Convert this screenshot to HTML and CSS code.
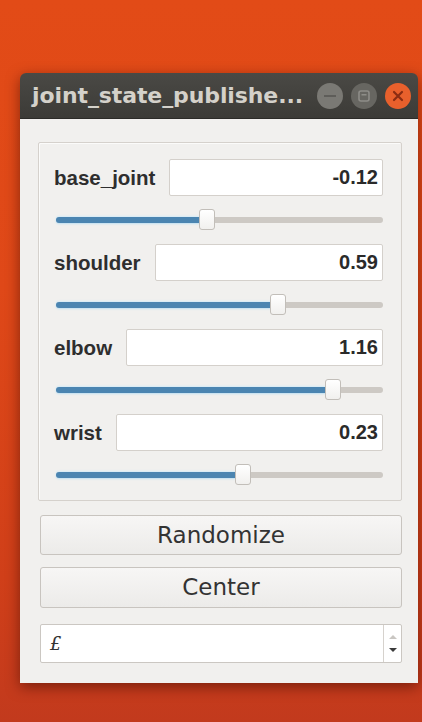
FILE: index.html
```html
<!DOCTYPE html>
<html>
<head>
<meta charset="utf-8">
<link rel="stylesheet" href="styles.css">
</head>
<body>
<div class="window">
  <div class="titlebar">
    <span class="title">joint_state_publishe...</span>
    <div class="controls">
      <span class="wbtn min"><svg width="28" height="28" viewBox="0 0 28 28"><circle cx="14" cy="14" r="13" fill="#7a7974"/><rect x="8" y="13" width="12" height="2" fill="#5e5d59"/></svg></span>
      <span class="wbtn max"><svg width="28" height="28" viewBox="0 0 28 28"><circle cx="14" cy="14" r="13" fill="#676661"/><rect x="9" y="9" width="10" height="10" rx="2" fill="none" stroke="#8e8d88" stroke-width="1.6"/><rect x="11.5" y="12" width="5" height="1.5" fill="#8e8d88"/></svg></span>
      <span class="wbtn close"><svg width="28" height="28" viewBox="0 0 28 28"><circle cx="14" cy="14" r="13" fill="#e8602c"/><path d="M10 10 L18 18 M18 10 L10 18" stroke="#8a2c12" stroke-width="2.2" stroke-linecap="round"/></svg></span>
    </div>
  </div>
  <div class="content">
    <div class="group">
      <div class="joint">
        <div class="row"><span class="label">base_joint</span><div class="value">-0.12</div></div>
        <div class="slider"><div class="track"><div class="fill" style="width:46.3%"></div><div class="handle" style="left:46.3%"></div></div></div>
      </div>
      <div class="joint">
        <div class="row"><span class="label">shoulder</span><div class="value">0.59</div></div>
        <div class="slider"><div class="track"><div class="fill" style="width:67.8%"></div><div class="handle" style="left:67.8%"></div></div></div>
      </div>
      <div class="joint">
        <div class="row"><span class="label">elbow</span><div class="value">1.16</div></div>
        <div class="slider"><div class="track"><div class="fill" style="width:84.7%"></div><div class="handle" style="left:84.7%"></div></div></div>
      </div>
      <div class="joint">
        <div class="row"><span class="label">wrist</span><div class="value">0.23</div></div>
        <div class="slider"><div class="track"><div class="fill" style="width:57.1%"></div><div class="handle" style="left:57.1%"></div></div></div>
      </div>
    </div>
    <div class="button b1">Randomize</div>
    <div class="button b2">Center</div>
    <div class="spin">
      <span class="spintext">£</span>
      <div class="arrows">
        <svg width="10" height="30" viewBox="0 0 10 30"><path d="M1 10 L9 10 L5 6 Z" fill="#c9c6c2"/><path d="M1 19 L9 19 L5 23 Z" fill="#3a3a3a"/></svg>
      </div>
    </div>
  </div>
</div>
</body>
</html>
```

FILE: styles.css
```css
html, body {
  margin: 0;
  padding: 0;
}
body {
  width: 422px;
  height: 722px;
  overflow: hidden;
  background: linear-gradient(180deg, #e24b17 0%, #df4818 40%, #d03f19 80%, #c23a1d 100%);
  font-family: "Liberation Sans", Arial, sans-serif;
}
.window {
  margin: 73px 0 0 20px;
  width: 398px;
  box-shadow: 0 4px 14px rgba(60, 10, 0, 0.55);
  border-radius: 6px 6px 0 0;
}
.titlebar {
  height: 45px;
  background: linear-gradient(180deg, #4a4945 0%, #3c3b37 100%);
  border-radius: 6px 6px 0 0;
  display: flex;
  align-items: center;
  padding: 0 6px 0 12px;
  box-sizing: border-box;
}
.title {
  font-family: "DejaVu Sans", sans-serif;
  font-weight: bold;
  font-size: 22px;
  color: #d4d1ca;
  white-space: nowrap;
  flex: 1;
  letter-spacing: -0.1px;
}
.controls {
  display: flex;
  gap: 6px;
  align-items: center;
}
.wbtn {
  display: block;
  width: 28px;
  height: 28px;
}
.wbtn svg { display: block; }
.content {
  background: #f1f0ee;
  padding: 23px 16px 20px 18px;
  border-top: 1px solid #2c2b28;
}
.group {
  border: 1px solid #d5d1cc;
  border-radius: 2px;
  padding: 16px 18px 1px 15px;
  box-shadow: inset 1px 1px 0 #fbfbfa;
}
.row {
  display: flex;
  align-items: center;
  gap: 14px;
  height: 37px;
}
.label {
  font-weight: bold;
  font-size: 20.5px;
  color: #2e2e2e;
  white-space: nowrap;
}
.value {
  flex: 1;
  height: 37px;
  box-sizing: border-box;
  background: #ffffff;
  border: 1px solid #d4d0cb;
  border-radius: 2px;
  text-align: right;
  font-weight: bold;
  font-size: 20px;
  line-height: 35px;
  padding-right: 4px;
  color: #2a2a2a;
}
.slider {
  height: 48px;
  display: flex;
  align-items: center;
  padding-left: 2px;
}
.track {
  position: relative;
  flex: 1;
  height: 6px;
  border-radius: 3px;
  background: #cdc9c4;
}
.fill {
  height: 6px;
  border-radius: 3px;
  background: #4b85b1;
  box-shadow: 0 1px 2px #bfe0f2, 0 -1px 2px #d6ecf7;
}
.handle {
  position: absolute;
  top: -8px;
  width: 16px;
  height: 21px;
  margin-left: -8px;
  box-sizing: border-box;
  background: linear-gradient(180deg, #ffffff, #f1f0ee);
  border: 1px solid #c2beb9;
  border-radius: 3px;
}
.button {
  margin: 0 0 0 2px;
  height: 40px;
  box-sizing: border-box;
  border: 1px solid #c8c4bf;
  border-radius: 3px;
  background: linear-gradient(180deg, #f7f6f5 0%, #ecebe9 100%);
  text-align: center;
  font-family: "DejaVu Sans", sans-serif;
  font-size: 23px;
  line-height: 38px;
  color: #333333;
}
.b1 { margin-top: 14px; }
.b2 { margin-top: 12px; height: 41px; }
.spin {
  margin: 16px 0 0 2px;
  height: 39px;
  box-sizing: border-box;
  border: 1px solid #cbc7c2;
  border-radius: 2px;
  background: #ffffff;
  display: flex;
  align-items: center;
}
.spintext {
  flex: 1;
  padding-left: 9px;
  font-family: "DejaVu Serif", serif;
  font-style: italic;
  font-size: 18px;
  color: #333;
}
.arrows {
  width: 17px;
  height: 37px;
  border-left: 1px solid #d6d2cd;
  display: flex;
  align-items: center;
  justify-content: center;
}
.arrows svg { display: block; }
```
